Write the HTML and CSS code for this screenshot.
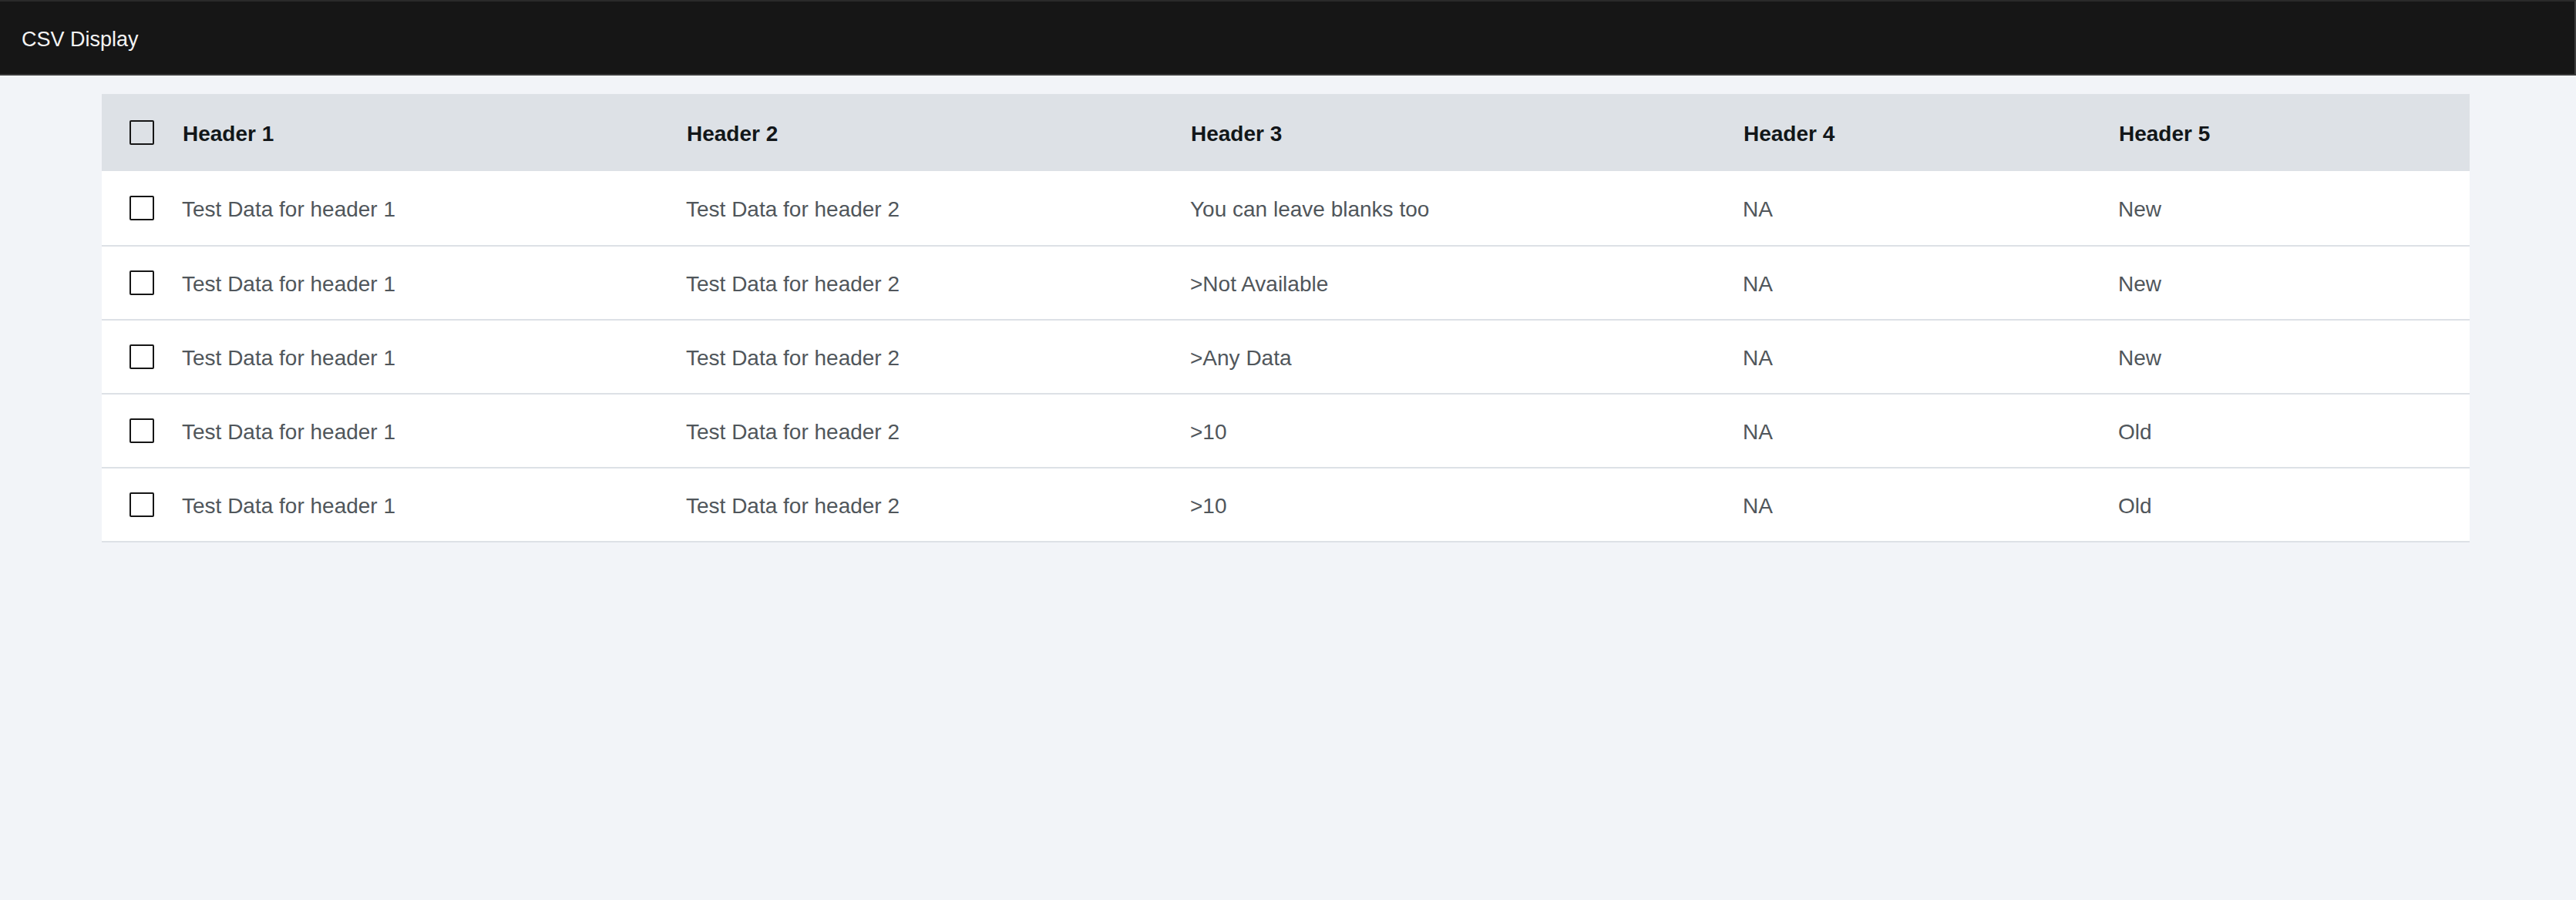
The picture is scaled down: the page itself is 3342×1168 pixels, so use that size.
FILE: index.html
```html
<!DOCTYPE html>
<html lang="en">
<head>
<meta charset="utf-8">
<title>CSV Display</title>
<link rel="stylesheet" href="styles.css">
</head>
<body>
<header class="app-header">
  <span class="app-name">CSV Display</span>
</header>
<main class="content">
  <div class="data-table" role="table">
    <div class="tr th-row" role="row">
      <div class="cell cell-check"><span class="checkbox"></span></div>
      <div class="cell th">Header 1</div>
      <div class="cell th">Header 2</div>
      <div class="cell th">Header 3</div>
      <div class="cell th">Header 4</div>
      <div class="cell th">Header 5</div>
    </div>
    <div class="tr body-row first" role="row">
      <div class="cell cell-check"><span class="checkbox"></span></div>
      <div class="cell td">Test Data for header 1</div>
      <div class="cell td">Test Data for header 2</div>
      <div class="cell td">You can leave blanks too</div>
      <div class="cell td">NA</div>
      <div class="cell td">New</div>
    </div>
    <div class="tr body-row" role="row">
      <div class="cell cell-check"><span class="checkbox"></span></div>
      <div class="cell td">Test Data for header 1</div>
      <div class="cell td">Test Data for header 2</div>
      <div class="cell td">&gt;Not Available</div>
      <div class="cell td">NA</div>
      <div class="cell td">New</div>
    </div>
    <div class="tr body-row" role="row">
      <div class="cell cell-check"><span class="checkbox"></span></div>
      <div class="cell td">Test Data for header 1</div>
      <div class="cell td">Test Data for header 2</div>
      <div class="cell td">&gt;Any Data</div>
      <div class="cell td">NA</div>
      <div class="cell td">New</div>
    </div>
    <div class="tr body-row" role="row">
      <div class="cell cell-check"><span class="checkbox"></span></div>
      <div class="cell td">Test Data for header 1</div>
      <div class="cell td">Test Data for header 2</div>
      <div class="cell td">&gt;10</div>
      <div class="cell td">NA</div>
      <div class="cell td">Old</div>
    </div>
    <div class="tr body-row" role="row">
      <div class="cell cell-check"><span class="checkbox"></span></div>
      <div class="cell td">Test Data for header 1</div>
      <div class="cell td">Test Data for header 2</div>
      <div class="cell td">&gt;10</div>
      <div class="cell td">NA</div>
      <div class="cell td">Old</div>
    </div>
  </div>
</main>
</body>
</html>
```
FILE: styles.css
```css
* { box-sizing: border-box; }

html, body {
  margin: 0;
  padding: 0;
}

body {
  background: #f2f4f8;
  font-family: "Liberation Sans", Arial, sans-serif;
  min-height: 1168px;
}

.app-header {
  height: 98px;
  background: #161616;
  border-top: 2px solid #2a2a2a;
  border-bottom: 2px solid #393939;
  border-right: 2px solid #3d3d3d;
  display: flex;
  align-items: center;
  padding-left: 28px;
}

.app-name {
  color: #f4f4f4;
  font-size: 27px;
  line-height: 1;
  padding-top: 4px;
}

.content {
  padding: 24px 0 0 132px;
}

.data-table {
  width: 3072px;
}

.tr {
  display: grid;
  grid-template-columns: 72px 654px 654px 717px 487px 488px;
  align-items: center;
}

.th-row {
  height: 100px;
  background: #dde1e6;
}

.body-row {
  height: 96px;
  background: #ffffff;
  border-bottom: 2px solid #dde1e6;
}

.body-row.first {
  height: 98px;
}

.cell {
  padding-left: 32px;
  padding-top: 3px;
  font-size: 28px;
  line-height: 1;
  white-space: nowrap;
}

.cell-check {
  padding-left: 36px;
  padding-top: 0;
  display: flex;
  align-items: center;
}

.th {
  font-weight: 700;
  color: #121619;
  padding-left: 33px;
}

.td {
  color: #50565b;
}

.checkbox {
  display: block;
  width: 32px;
  height: 32px;
  border: 2px solid #161616;
  border-radius: 2px;
  background: transparent;
}

.body-row .checkbox {
  background: #ffffff;
}
```
